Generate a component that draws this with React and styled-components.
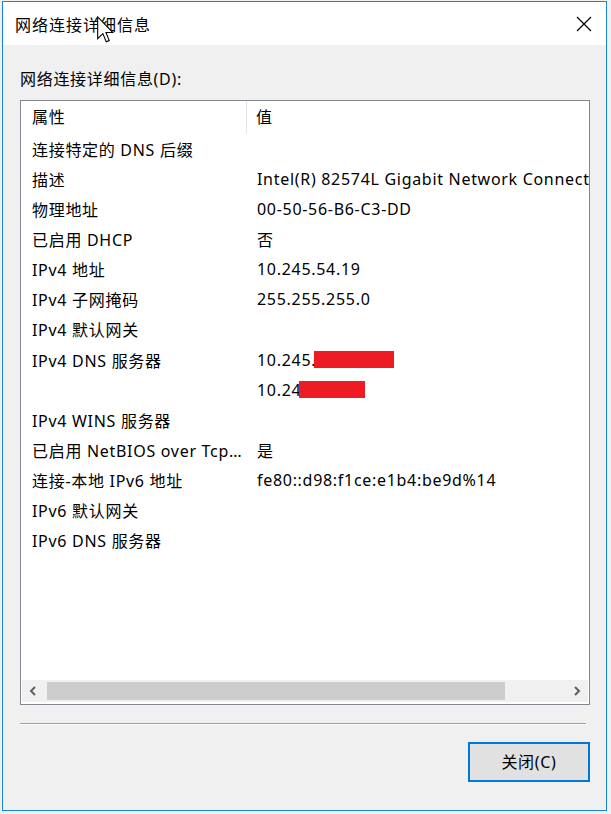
import React from "react";
import styled, { createGlobalStyle } from "styled-components";

const GlobalStyle = createGlobalStyle`
  html, body {
    margin: 0;
    padding: 0;
    background: #f0f0f0;
  }
  body {
    width: 611px;
    height: 814px;
    overflow: hidden;
    font-family: "Noto Sans", "Noto Sans CJK SC", sans-serif;
  }
`;

const rows = [
  { name: "连接特定的 DNS 后缀", value: "" },
  { name: "描述", value: "Intel(R) 82574L Gigabit Network Connection" },
  { name: "物理地址", value: "00-50-56-B6-C3-DD" },
  { name: "已启用 DHCP", value: "否" },
  { name: "IPv4 地址", value: "10.245.54.19" },
  { name: "IPv4 子网掩码", value: "255.255.255.0" },
  { name: "IPv4 默认网关", value: "" },
  { name: "IPv4 DNS 服务器", value: "10.245.", mark: 80 },
  { name: "", value: "10.24", mark: 66 },
  { name: "IPv4 WINS 服务器", value: "" },
  { name: "已启用 NetBIOS over Tcpip", value: "是" },
  { name: "连接-本地 IPv6 地址", value: "fe80::d98:f1ce:e1b4:be9d%14" },
  { name: "IPv6 默认网关", value: "" },
  { name: "IPv6 DNS 服务器", value: "" },
];

const Window = styled.div`
  box-sizing: border-box;
  margin: 1px 0 0 2px;
  width: 605px;
  height: 810px;
  border: 1px solid #1883d7;
  display: flex;
  flex-direction: column;
  background: #f0f0f0;
`;

const TitleBar = styled.div`
  position: relative;
  height: 43px;
  background: #ffffff;
  display: flex;
  align-items: center;
  justify-content: space-between;
  padding: 0 14px 0 12px;
  font-size: 16px;
  letter-spacing: 1px;
  color: #000;
`;

const Cursor = styled.svg`
  position: absolute;
  left: 94px;
  top: 14px;
`;

const Content = styled.div`
  flex: 1;
  display: flex;
  flex-direction: column;
  padding: 23px 16px 0 17px;
  font-size: 16px;
  letter-spacing: 0.7px;
  color: #000;
`;

const Label = styled.div`
  height: 22px;
  line-height: 22px;
  margin-bottom: 10px;
`;

const ListBox = styled.div`
  box-sizing: border-box;
  height: 605px;
  border: 1px solid #828790;
  background: #ffffff;
  display: flex;
  flex-direction: column;
  overflow: hidden;
`;

const Grid = styled.div`
  flex: 1;
  overflow: hidden;
`;

const Header = styled.div`
  display: grid;
  grid-template-columns: 226px 1fr;
  height: 33px;
  margin-bottom: 1px;
`;

const HeaderCell = styled.div`
  display: flex;
  align-items: center;
  padding-left: ${(p) => p.$pad}px;
  padding-bottom: 4px;
  box-sizing: border-box;
  border-right: ${(p) => (p.$sep ? "1px solid #e5e5e5" : "none")};
  white-space: nowrap;
`;

const Row = styled.div`
  display: grid;
  grid-template-columns: 226px 1fr;
  height: 30.15px;
  align-items: center;
`;

const Cell = styled.div`
  padding-left: ${(p) => p.$pad}px;
  padding-right: ${(p) => p.$right}px;
  padding-bottom: 3px;
  white-space: nowrap;
  overflow: hidden;
  display: flex;
  align-items: center;
`;

const NameText = styled.span`
  overflow: hidden;
  text-overflow: ellipsis;
  white-space: nowrap;
`;

const Redaction = styled.span`
  display: inline-block;
  width: ${(p) => p.$w}px;
  height: 17px;
  background: #ed1c24;
  margin-left: -2px;
`;

const HScroll = styled.div`
  height: 22px;
  margin: 0 1px 2px 1px;
  background: #f0f0f0;
  display: flex;
  align-items: center;
`;

const ArrowBtn = styled.div`
  width: 22px;
  height: 22px;
  display: flex;
  align-items: center;
  justify-content: center;
`;

const Track = styled.div`
  flex: 1;
  height: 100%;
  display: flex;
  align-items: center;
`;

const Thumb = styled.div`
  height: 18px;
  width: 458px;
  background: #cdcdcd;
  margin-left: 3px;
`;

const Separator = styled.div`
  height: 1px;
  background: #a0a0a0;
  margin: 18px 4px 0 0;
  box-shadow: 0 1px 0 #ffffff;
`;

const Footer = styled.div`
  display: flex;
  justify-content: flex-end;
  padding-top: 18px;
`;

const Button = styled.button`
  box-sizing: border-box;
  width: 122px;
  height: 40px;
  border: 2px solid #0078d7;
  background: #e1e1e1;
  font-family: "Noto Sans", "Noto Sans CJK SC", sans-serif;
  font-size: 16px;
  letter-spacing: 0.7px;
  color: #000;
  padding: 0 0 2px;
`;

const Chevron = ({ dir }) => (
  <svg width="8" height="10" viewBox="0 0 8 10">
    <path
      d={dir === "left" ? "M6 1 L2 5 L6 9" : "M2 1 L6 5 L2 9"}
      fill="none"
      stroke="#606060"
      strokeWidth="2"
    />
  </svg>
);

export default function App() {
  return (
    <>
      <GlobalStyle />
      <Window>
        <TitleBar>
          <span>网络连接详细信息</span>
          <svg width="16" height="16" viewBox="0 0 16 16">
            <path d="M1 1 L15 15 M15 1 L1 15" stroke="#000" strokeWidth="1.2" />
          </svg>
          <Cursor width="17" height="27" viewBox="0 0 12.5 19.5">
            <path
              d="M0.5 0.5 L0.5 16.5 L4.3 12.8 L6.8 18.8 L9 17.9 L6.6 12 L11.7 12 Z"
              fill="#fff"
              stroke="#000"
              strokeWidth="0.8"
              strokeLinejoin="miter"
            />
          </Cursor>
        </TitleBar>
        <Content>
          <Label>网络连接详细信息(D):</Label>
          <ListBox>
            <Grid>
              <Header>
                <HeaderCell $pad={11} $sep>属性</HeaderCell>
                <HeaderCell $pad={9}>值</HeaderCell>
              </Header>
              {rows.map((r, i) => (
                <Row key={i}>
                  <Cell $pad={11} $right={5}>
                    <NameText>{r.name}</NameText>
                  </Cell>
                  <Cell $pad={10} $right={0}>
                    {r.value}
                    {r.mark ? <Redaction $w={r.mark} /> : null}
                  </Cell>
                </Row>
              ))}
            </Grid>
            <HScroll>
              <ArrowBtn>
                <Chevron dir="left" />
              </ArrowBtn>
              <Track>
                <Thumb />
              </Track>
              <ArrowBtn>
                <Chevron dir="right" />
              </ArrowBtn>
            </HScroll>
          </ListBox>
          <Separator />
          <Footer>
            <Button>关闭(C)</Button>
          </Footer>
        </Content>
      </Window>
    </>
  );
}
